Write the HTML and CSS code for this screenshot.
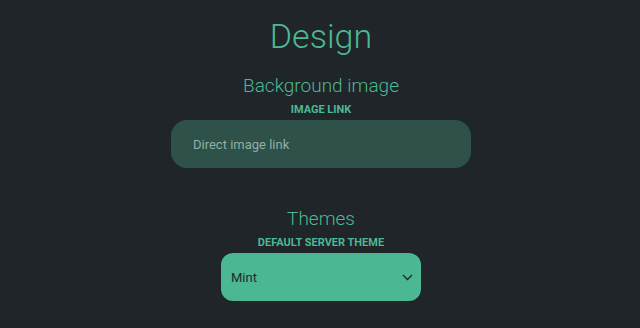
FILE: index.html
```html
<!DOCTYPE html>
<html lang="en">
<head>
    <meta charset="UTF-8">
    <title>Design</title>
    <link rel="stylesheet" href="styles.css">
</head>
<body>

<div class="page">
    <h1>Design</h1>

    <section class="group">
        <h2>Background image</h2>
        <label class="field-label" for="bgLink">Image link</label>
        <input type="text" id="bgLink" class="text-input" placeholder="Direct image link">
    </section>

    <section class="group themes">
        <h2>Themes</h2>
        <label class="field-label">Default server theme</label>
        <div class="select-box">
            <span>Mint</span>
            <svg width="11" height="7" viewBox="0 0 11 7"><path d="M1 1 L5.5 5.5 L10 1" fill="none" stroke="#1e2a2a" stroke-width="1.4"/></svg>
        </div>
    </section>
</div>

</body>
</html>
```

FILE: styles.css
```css
body {
    margin: 0;
    padding: 0;
    background-color: #1f2529;
    font-family: 'Roboto', sans-serif;
    color: #4db893;
}
.page {
    display: flex;
    flex-direction: column;
    align-items: center;
    padding-top: 12px;
    padding-left: 2px;
}
h1 {
    margin: 0;
    font-size: 34px;
    font-weight: 300;
    line-height: 48px;
}
h2 {
    margin: 0;
    font-size: 19px;
    font-weight: 300;
    line-height: 26px;
}
.group {
    display: flex;
    flex-direction: column;
    align-items: center;
    margin-top: 13px;
}
.themes {
    margin-top: 38px;
}
.field-label {
    font-size: 11px;
    font-weight: 700;
    text-transform: uppercase;
    line-height: 14px;
    margin-top: 4px;
    margin-bottom: 3px;
}
.text-input {
    box-sizing: border-box;
    width: 300px;
    height: 48px;
    border: none;
    border-radius: 16px;
    background-color: #2e5149;
    padding: 0 22px;
    font-family: 'Roboto', sans-serif;
    font-size: 13px;
    color: #cfe;
    outline: none;
}
.text-input::placeholder {
    color: #8fb0a6;
}
.select-box {
    box-sizing: border-box;
    width: 200px;
    height: 48px;
    border-radius: 12px;
    background-color: #4cb893;
    color: #1e2a2a;
    display: flex;
    align-items: center;
    justify-content: space-between;
    padding: 0 8px 0 10px;
    font-size: 13px;
}
```
